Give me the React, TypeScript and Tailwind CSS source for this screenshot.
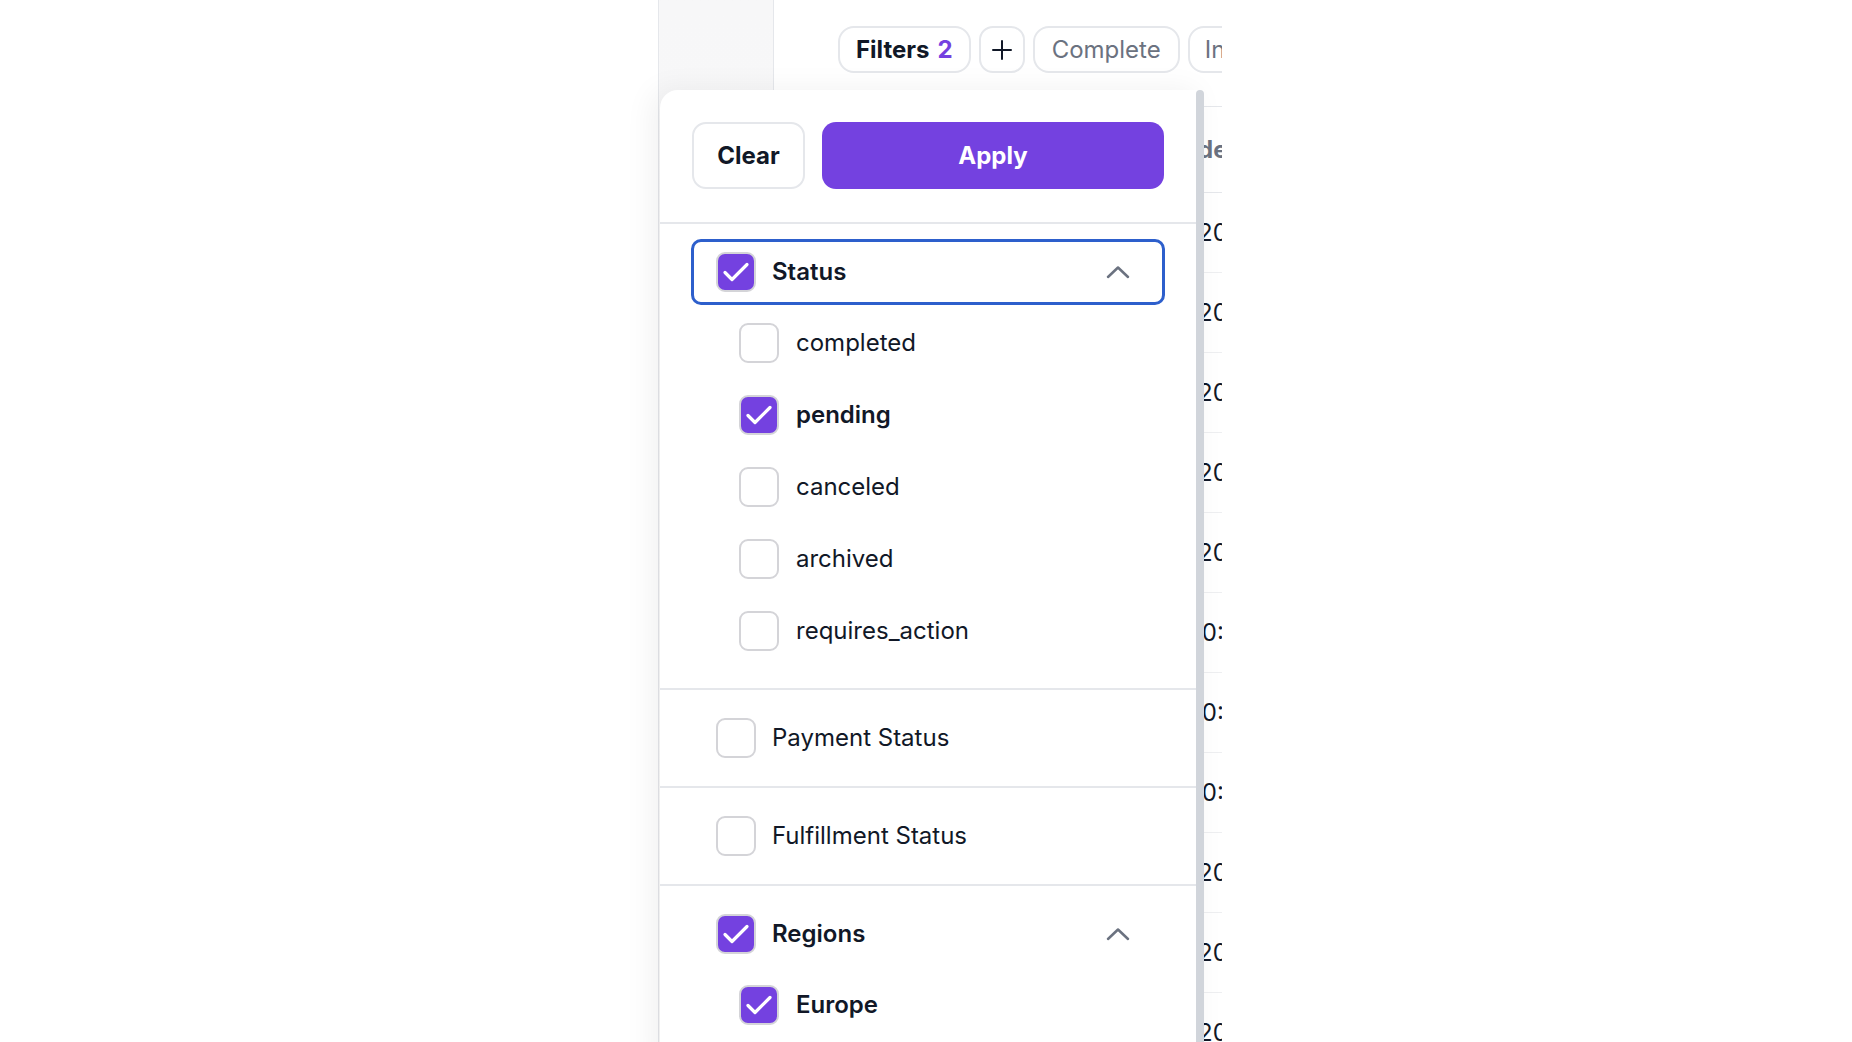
import React from "react"

const statusOptions = [
  { label: "completed", checked: false },
  { label: "pending", checked: true },
  { label: "canceled", checked: false },
  { label: "archived", checked: false },
  { label: "requires_action", checked: false },
]

const tableRows = [
  { text: "2024-03-12", time: false },
  { text: "2024-03-11", time: false },
  { text: "2024-03-10", time: false },
  { text: "2024-03-09", time: false },
  { text: "2024-03-08", time: false },
  { text: "10:42 AM", time: true },
  { text: "10:15 AM", time: true },
  { text: "10:03 AM", time: true },
  { text: "2024-03-04", time: false },
  { text: "2024-03-03", time: false },
  { text: "2024-03-02", time: false },
]

function Check({ checked }: { checked: boolean }) {
  return (
    <div
      className={
        "w-[40px] h-[40px] flex-none rounded-[9px] border-2 flex items-center justify-center " +
        (checked ? "bg-[#7441e0] border-[#d4d4d8]" : "bg-white border-[#d4d4d8]")
      }
    >
      {checked && (
        <svg width="36" height="36" viewBox="0 0 36 36" fill="none">
          <path d="M7 18.5 L14 25.5 L29 10.5" stroke="white" strokeWidth="3.2" strokeLinecap="round" strokeLinejoin="round" />
        </svg>
      )}
    </div>
  )
}

function ChevronUp() {
  return (
    <svg width="26" height="16" viewBox="0 0 26 16" fill="none">
      <path d="M3 13 L13 3.5 L23 13" stroke="#6b7280" strokeWidth="2.5" strokeLinecap="round" strokeLinejoin="round" />
    </svg>
  )
}

function SectionHeader({ label, checked, open, focused }: { label: string; checked: boolean; open?: boolean; focused?: boolean }) {
  return (
    <div
      className={
        "h-[66px] flex items-center pl-[22px] pr-[31px] rounded-[10px] border-[3px] " +
        (focused ? "border-[#2d5fcc]" : "border-transparent")
      }
    >
      <Check checked={checked} />
      <span className={"ml-[16px] text-[24px] text-[#111827] " + (checked ? "font-semibold" : "font-normal")}>{label}</span>
      {open && (
        <span className="ml-auto">
          <ChevronUp />
        </span>
      )}
    </div>
  )
}

function Option({ label, checked }: { label: string; checked: boolean }) {
  return (
    <div className="h-[72px] flex items-center pl-[79px]">
      <Check checked={checked} />
      <span className={"ml-[17px] text-[24px] text-[#111827] " + (checked ? "font-semibold" : "font-normal")}>{label}</span>
    </div>
  )
}

export default function App() {
  return (
    <div className="w-full h-[1042px] bg-white flex overflow-hidden" style={{ fontFamily: "Inter, 'Noto Sans', sans-serif" }}>
      <div className="w-[658px] flex-none" />

      {/* phone viewport */}
      <div className="relative w-[564px] flex-none h-full border-l border-[#e5e7eb] flex">
        {/* sidebar */}
        <div className="w-[115px] flex-none h-full bg-gradient-to-b from-[#f7f7f8] to-[#fafafa] border-r border-[#e5e7eb]" />

        {/* main */}
        <div className="flex-1 min-w-0 h-full overflow-hidden bg-white">
          <div className="flex items-start gap-[8px] pl-[64px] pt-[26px] h-[106px]">
            <div className="flex-none h-[47px] px-[16px] rounded-[16px] border-2 border-[#e5e7eb] flex items-center gap-[8px] text-[24px] whitespace-nowrap">
              <span className="font-bold text-[#111827]">Filters</span>
              <span className="font-bold text-[#7441e0]">2</span>
            </div>
            <div className="flex-none w-[46px] h-[47px] rounded-[14px] border-2 border-[#e5e7eb] flex items-center justify-center">
              <svg width="22" height="22" viewBox="0 0 22 22" fill="none">
                <path d="M11 2 V20 M2 11 H20" stroke="#111827" strokeWidth="2" strokeLinecap="round" />
              </svg>
            </div>
            <div className="flex-none h-[47px] px-[17px] rounded-[16px] border-2 border-[#e5e7eb] flex items-center text-[24px] text-[#6b7280] whitespace-nowrap">
              Complete
            </div>
            <div className="flex-none h-[47px] px-[15px] rounded-[16px] border-2 border-[#e5e7eb] flex items-center text-[24px] text-[#6b7280] whitespace-nowrap">
              In progress
            </div>
          </div>

          {/* table */}
          <div className="border-t border-[#e5e7eb]">
            <div className="grid grid-cols-[424px_1fr] h-[86px] items-center border-b border-[#e5e7eb] whitespace-nowrap">
              <span />
              <span className="text-[24px] font-bold text-[#6b7280]">delivered</span>
            </div>
            {tableRows.map((r, i) => (
              <div key={i} className="grid grid-cols-[424px_1fr] h-[80px] items-center border-b border-[#eeeff1] whitespace-nowrap">
                <span />
                <span className={"text-[24px] text-[#111827] " + (r.time ? "-ml-[6px]" : "")}>{r.text}</span>
              </div>
            ))}
          </div>
        </div>

        {/* filter popover */}
        <div className="absolute left-[1px] top-[90px] w-[544px] h-[980px] flex bg-white rounded-tl-[18px] shadow-[-8px_0_30px_rgba(0,0,0,0.06)]">
          <div className="w-[536px] flex-none">
            <div className="flex gap-[17px] pl-[32px] pr-[32px] pt-[32px] pb-[33px] border-b-2 border-[#e5e7eb]">
              <button className="w-[113px] h-[67px] rounded-[14px] border-2 border-[#e5e7eb] bg-white text-[24px] font-bold text-[#111827]">
                Clear
              </button>
              <button className="flex-1 h-[67px] rounded-[14px] bg-[#7441e0] text-[24px] font-bold text-white">Apply</button>
            </div>

            <div className="pt-[15px] pb-[21px] px-[31px] border-b-2 border-[#e5e7eb]">
              <SectionHeader label="Status" checked open focused />
              <div className="-mx-[31px] pt-[2px]">
                {statusOptions.map((o) => (
                  <Option key={o.label} label={o.label} checked={o.checked} />
                ))}
              </div>
            </div>

            <div className="py-[15px] px-[31px] border-b-2 border-[#e5e7eb]">
              <SectionHeader label="Payment Status" checked={false} />
            </div>

            <div className="py-[15px] px-[31px] border-b-2 border-[#e5e7eb]">
              <SectionHeader label="Fulfillment Status" checked={false} />
            </div>

            <div className="pt-[15px] px-[31px]">
              <SectionHeader label="Regions" checked open />
              <div className="-mx-[31px] pt-[2px]">
                <Option label="Europe" checked />
                <Option label="North America" checked={false} />
              </div>
            </div>
          </div>
          <div className="w-[8px] flex-none h-full rounded-full bg-[#d1d5db]" />
        </div>
      </div>
    </div>
  )
}
